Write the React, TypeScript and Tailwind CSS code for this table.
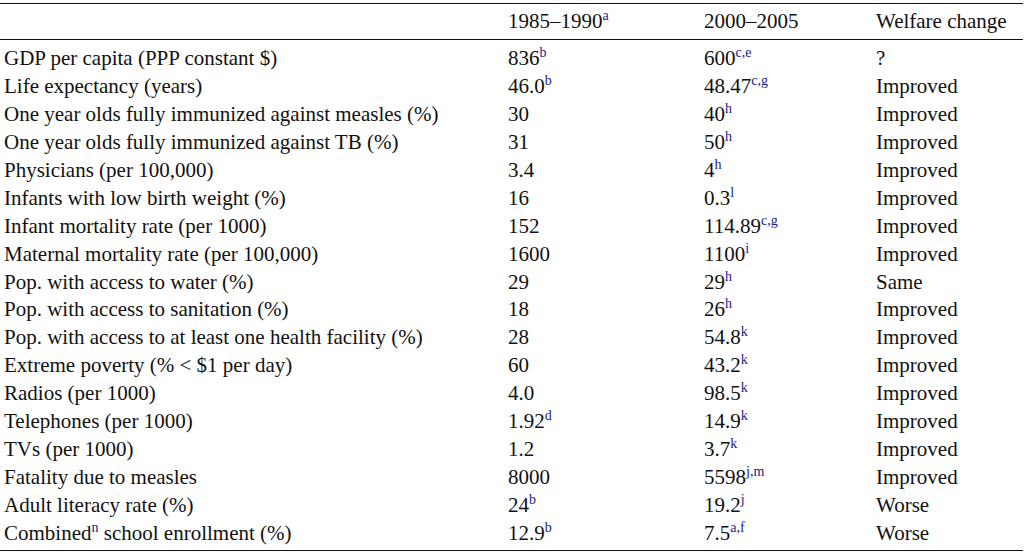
type Cell = { v: string; sup?: string };

const rows: { label: string; labelSup?: [string, string, string]; a: Cell; b: Cell; c: string }[] = [
  { label: "GDP per capita (PPP constant $)", a: { v: "836", sup: "b" }, b: { v: "600", sup: "c,e" }, c: "?" },
  { label: "Life expectancy (years)", a: { v: "46.0", sup: "b" }, b: { v: "48.47", sup: "c,g" }, c: "Improved" },
  { label: "One year olds fully immunized against measles (%)", a: { v: "30" }, b: { v: "40", sup: "h" }, c: "Improved" },
  { label: "One year olds fully immunized against TB (%)", a: { v: "31" }, b: { v: "50", sup: "h" }, c: "Improved" },
  { label: "Physicians (per 100,000)", a: { v: "3.4" }, b: { v: "4", sup: "h" }, c: "Improved" },
  { label: "Infants with low birth weight (%)", a: { v: "16" }, b: { v: "0.3", sup: "l" }, c: "Improved" },
  { label: "Infant mortality rate (per 1000)", a: { v: "152" }, b: { v: "114.89", sup: "c,g" }, c: "Improved" },
  { label: "Maternal mortality rate (per 100,000)", a: { v: "1600" }, b: { v: "1100", sup: "i" }, c: "Improved" },
  { label: "Pop. with access to water (%)", a: { v: "29" }, b: { v: "29", sup: "h" }, c: "Same" },
  { label: "Pop. with access to sanitation (%)", a: { v: "18" }, b: { v: "26", sup: "h" }, c: "Improved" },
  { label: "Pop. with access to at least one health facility (%)", a: { v: "28" }, b: { v: "54.8", sup: "k" }, c: "Improved" },
  { label: "Extreme poverty (% < $1 per day)", a: { v: "60" }, b: { v: "43.2", sup: "k" }, c: "Improved" },
  { label: "Radios (per 1000)", a: { v: "4.0" }, b: { v: "98.5", sup: "k" }, c: "Improved" },
  { label: "Telephones (per 1000)", a: { v: "1.92", sup: "d" }, b: { v: "14.9", sup: "k" }, c: "Improved" },
  { label: "TVs (per 1000)", a: { v: "1.2" }, b: { v: "3.7", sup: "k" }, c: "Improved" },
  { label: "Fatality due to measles", a: { v: "8000" }, b: { v: "5598", sup: "j,m" }, c: "Improved" },
  { label: "Adult literacy rate (%)", a: { v: "24", sup: "b" }, b: { v: "19.2", sup: "j" }, c: "Worse" },
  { label: "", labelSup: ["Combined", "n", " school enrollment (%)"], a: { v: "12.9", sup: "b" }, b: { v: "7.5", sup: "a,f" }, c: "Worse" },
];

function Sup({ children }: { children: string }) {
  return <sup className="text-[14px] text-[#1a1a8c] -top-[8px]">{children}</sup>;
}

function Val({ cell }: { cell: Cell }) {
  return (
    <span>
      {cell.v}
      {cell.sup && <Sup>{cell.sup}</Sup>}
    </span>
  );
}

export default function App() {
  return (
    <div className="w-[1027px] h-[554px] bg-white pt-[3px] font-[family-name:Liberation_Serif,serif] text-[21px] text-[#111] leading-none">
      <div className="w-[1023px] border-t border-b border-[#111] pb-[3px]">
        <div className="grid grid-cols-[508px_196px_172px_1fr] items-center h-[36px] border-b border-[#111]">
          <div />
          <div>
            1985–1990<Sup>a</Sup>
          </div>
          <div>2000–2005</div>
          <div>Welfare change</div>
        </div>
        <div className="pt-[5px]">
          {rows.map((r, i) => (
            <div key={i} className="grid grid-cols-[508px_196px_172px_1fr] items-center h-[27.9px]">
              <div className="pl-[4px]">
                {r.labelSup ? (
                  <span>
                    {r.labelSup[0]}
                    <Sup>{r.labelSup[1]}</Sup>
                    {r.labelSup[2]}
                  </span>
                ) : (
                  r.label
                )}
              </div>
              <div>
                <Val cell={r.a} />
              </div>
              <div>
                <Val cell={r.b} />
              </div>
              <div>{r.c}</div>
            </div>
          ))}
        </div>
      </div>
    </div>
  );
}
